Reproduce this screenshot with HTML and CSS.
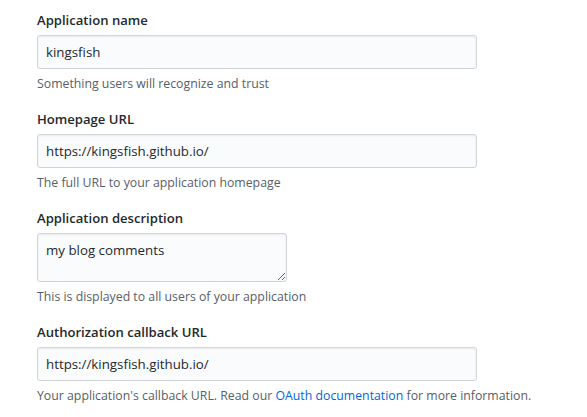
FILE: index.html
```html
<!DOCTYPE html>
<html>
<head>
<meta charset="utf-8">
<link rel="stylesheet" href="styles.css">
</head>
<body>
<form class="form">
  <dl class="group">
    <dt><label class="label">Application name</label></dt>
    <dd>
      <input class="input" type="text" value="kingsfish">
      <p class="note">Something users will recognize and trust</p>
    </dd>
  </dl>
  <dl class="group">
    <dt><label class="label">Homepage URL</label></dt>
    <dd>
      <input class="input" type="text" value="https://kingsfish.github.io/">
      <p class="note">The full URL to your application homepage</p>
    </dd>
  </dl>
  <dl class="group">
    <dt><label class="label">Application description</label></dt>
    <dd>
      <textarea class="input area">my blog comments</textarea>
      <p class="note">This is displayed to all users of your application</p>
    </dd>
  </dl>
  <dl class="group">
    <dt><label class="label">Authorization callback URL</label></dt>
    <dd>
      <input class="input" type="text" value="https://kingsfish.github.io/">
      <p class="note">Your application's callback URL. Read our <a class="link" href="#">OAuth documentation</a> for more information.</p>
    </dd>
  </dl>
</form>
</body>
</html>
```
FILE: styles.css
```css
html, body {
  margin: 0;
  padding: 0;
  background: #ffffff;
}
body {
  font-family: "Open Sans", "Liberation Sans", sans-serif;
  font-size: 14px;
  color: #24292e;
}
.form {
  padding: 8px 0 0 37px;
}
.group {
  margin: 0 0 14px 0;
}
.group dt {
  margin: 0 0 4px 0;
  padding-top: 2px;
}
.group dd {
  margin: 0;
}
.label {
  display: block;
  font-weight: 600;
  font-size: 13.1px;
  line-height: 21px;
  color: #24292e;
}
.input {
  display: block;
  box-sizing: border-box;
  width: 440px;
  height: 34px;
  margin: 0;
  padding: 6px 8px;
  font-family: inherit;
  font-size: 13.3px;
  line-height: 20px;
  color: #24292e;
  background: #fafbfc;
  border: 1px solid #d1d5da;
  border-radius: 3px;
  box-shadow: inset 0 1px 2px rgba(27,31,35,0.075);
  outline: none;
}
.area {
  width: 250px;
  height: 49px;
  resize: both;
}
.note {
  margin: 6px 0 0 0;
  font-size: 12.3px;
  line-height: 18px;
  color: #586069;
}
.link {
  color: #0366d6;
  text-decoration: none;
}
```
